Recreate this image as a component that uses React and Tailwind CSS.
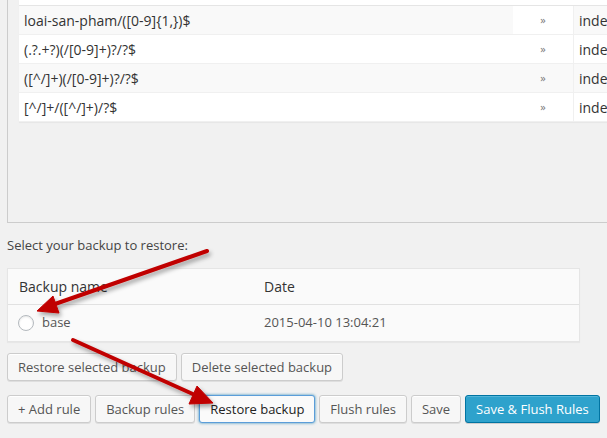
import React from 'react';

const rules = [
  { pattern: 'loai-san-pham/([0-9]{1,})$', target: 'index.php?product_cat=$matches[1]', striped: true, hot: true },
  { pattern: '(.?.+?)(/[0-9]+)?/?$', target: 'index.php?pagename=$matches[1]&page=$matches[2]' },
  { pattern: '([^/]+)(/[0-9]+)?/?$', target: 'index.php?name=$matches[1]&page=$matches[2]', striped: true },
  { pattern: '[^/]+/([^/]+)/?$', target: 'index.php?attachment=$matches[1]' },
];

const Btn = ({ children, focus, primary }) => {
  let cls = 'h-[28px] px-[10px] rounded-[3px] border text-[13px] leading-none whitespace-nowrap ';
  if (primary) {
    cls += 'bg-[#2ea2cc] border-[#0074a2] text-white shadow-[inset_0_1px_0_rgba(120,200,230,0.5),0_1px_0_rgba(0,0,0,0.15)]';
  } else if (focus) {
    cls += 'bg-[#fafafa] border-[#5b9dd9] text-[#222] shadow-[0_0_3px_rgba(0,115,170,0.8)]';
  } else {
    cls += 'bg-[#f7f7f7] border-[#cccccc] text-[#555] shadow-[inset_0_1px_0_#fff,0_1px_0_rgba(0,0,0,0.08)]';
  }
  return <button className={cls}>{children}</button>;
};

const Arrows = () => (
  <svg className="absolute inset-0 pointer-events-none" width="607" height="438">
    <defs>
      <filter id="sh" x="-20%" y="-20%" width="140%" height="140%">
        <feDropShadow dx="2" dy="3" stdDeviation="2" floodColor="#000" floodOpacity="0.35" />
      </filter>
    </defs>
    <g filter="url(#sh)" fill="#c00000" stroke="#c00000">
      <line x1="207" y1="251" x2="55" y2="304" strokeWidth="4" strokeLinecap="round" />
      <polygon points="37,311 59,313 53,296" strokeWidth="1" strokeLinejoin="round" />
      <line x1="73" y1="340" x2="195" y2="395" strokeWidth="4" strokeLinecap="round" />
      <polygon points="213,403 189,404 197,386" strokeWidth="1" strokeLinejoin="round" />
    </g>
  </svg>
);

export default function App() {
  return (
    <div className="relative w-[607px] h-[438px] overflow-hidden bg-[#f1f1f1] text-[#444]" style={{ fontFamily: '"Open Sans", "Liberation Sans", sans-serif' }}>
      <div className="pl-[7px]">
        <div className="h-[223px] w-[900px] border-l border-b border-[#cccccc] pl-[11px]">
          <div className="w-[880px] bg-white shadow-[0_1px_1px_rgba(0,0,0,0.04)]">
            <div className="h-[6px] bg-white border-b border-[#e5e5e5]" />
            {rules.map((r, i) => (
              <div key={i} className={`grid grid-cols-[494px_60px_1fr] h-[29px] items-stretch text-[14px] text-[#333] border-b border-[#f0f0f0] ${r.striped ? 'bg-[#f9f9f9]' : 'bg-white'}`}>
                <div className="flex items-center pl-[5px]">{r.pattern}</div>
                <div className={`flex items-center justify-center text-[11px] text-[#777] ${r.hot ? 'bg-white' : ''}`}>»</div>
                <div className="flex items-center pl-[5px] border-l border-[#f0f0f0] whitespace-nowrap">{r.target}</div>
              </div>
            ))}
          </div>
        </div>

        <p className="mt-[12px] h-[20px] leading-[20px] text-[13px] text-[#444]">Select your backup to restore:</p>

        <div className="mt-[13px] w-[573px] border border-[#e5e5e5] bg-[#fafafa] shadow-[0_1px_1px_rgba(0,0,0,0.04)] text-[14px] text-[#333]">
          <div className="grid grid-cols-[245px_1fr] h-[36px] items-center border-b border-[#e1e1e1] px-[11px]">
            <div className="text-[#333]">Backup name</div>
            <div>Date</div>
          </div>
          <div className="grid grid-cols-[246px_1fr] h-[36px] items-center px-[10px]">
            <label className="flex items-center gap-[8px] text-[13px] text-[#555]">
              <span className="w-[16px] h-[16px] rounded-full border border-[#b4b9be] bg-white shadow-[inset_0_1px_2px_rgba(0,0,0,0.1)]" />
              base
            </label>
            <div className="text-[13px] text-[#555]">2015-04-10 13:04:21</div>
          </div>
        </div>

        <div className="mt-[11px] flex gap-[4px]">
          <Btn>Restore selected backup</Btn>
          <Btn>Delete selected backup</Btn>
        </div>

        <div className="mt-[14px] flex gap-[4px]">
          <Btn>+ Add rule</Btn>
          <Btn>Backup rules</Btn>
          <Btn focus>Restore backup</Btn>
          <Btn>Flush rules</Btn>
          <Btn>Save</Btn>
          <Btn primary>Save &amp; Flush Rules</Btn>
        </div>
      </div>
      <Arrows />
    </div>
  );
}
